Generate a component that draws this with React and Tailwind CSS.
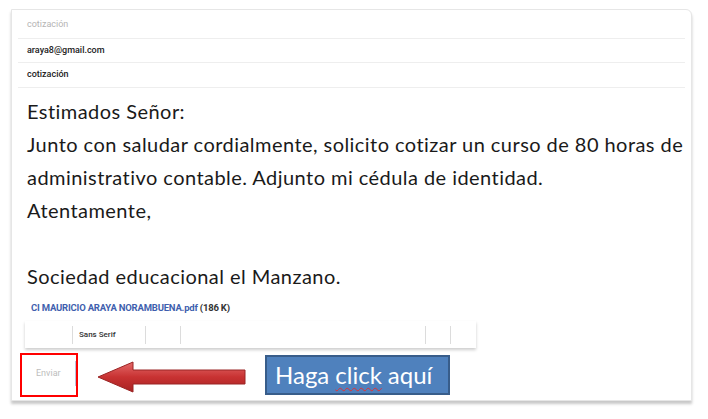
export default function App() {
  const ui = { fontFamily: 'Roboto, "Liberation Sans", sans-serif' };
  const body = { fontFamily: 'Lato, "Open Sans", sans-serif' };

  return (
    <div className="relative w-[708px] h-[419px] bg-white overflow-hidden" style={ui}>
      {/* mail compose card */}
      <div className="ml-[11px] mt-[9px] w-[681px] h-[392px] bg-white border border-[#e6e6e6] rounded-tr-[6px] shadow-[0_3px_3px_rgba(0,0,0,0.22)] flex flex-col">
        <div className="h-[28px] pl-[15px] pt-[2px] flex items-center text-[9px] text-[#b4b4b4]">cotización</div>
        <div className="mx-[6px] h-[25px] border-y border-[#eeeeee] flex items-center pl-[9px] text-[9px] font-medium text-[#222]">
          araya8@gmail.com
        </div>
        <div className="mx-[6px] h-[25px] border-b border-[#eeeeee] flex items-center pl-[9px] text-[9px] font-medium text-[#222]">
          cotización
        </div>

        <div className="pl-[15px] pt-[7px] text-[20px] tracking-[0.45px] leading-[33px] text-[#1a1a1a]" style={body}>
          <p>Estimados Señor:</p>
          <p>Junto con saludar cordialmente, solicito cotizar un curso de 80 horas de</p>
          <p>administrativo contable. Adjunto mi cédula de identidad.</p>
          <p>Atentamente,</p>
          <p>&nbsp;</p>
          <p>Sociedad educacional el Manzano.</p>
        </div>

        <div className="pl-[19px] mt-[8px] text-[9.5px] font-bold tracking-[-0.2px]">
          <span className="text-[#3f5fae]">CI MAURICIO ARAYA NORAMBUENA.pdf</span>
          <span className="text-[#333]"> (186 K)</span>
        </div>

        <div className="ml-[13px] mt-[6px] w-[451px] h-[27px] bg-white shadow-[0_2px_3px_rgba(0,0,0,0.2)] flex items-center text-[8px] font-medium text-[#333]">
          <div className="w-[48px] h-[18px] border-r border-[#dcdcdc]" />
          <div className="w-[73px] h-[18px] border-r border-[#dcdcdc] flex items-center pl-[6px]">Sans Serif</div>
          <div className="w-[35px] h-[18px] border-r border-[#dcdcdc]" />
          <div className="w-[245px] h-[18px] border-r border-[#dcdcdc]" />
          <div className="w-[25px] h-[18px] border-r border-[#dcdcdc]" />
        </div>

        <div className="flex items-center h-[40px] pl-[24px] mt-[5px]">
          <span className="text-[9px] text-[#bdbdbd]">Enviar</span>
          <div className="ml-[14px] w-[2px] h-[25px] bg-[#b8c4dc]" />
        </div>
      </div>

      {/* annotations */}
      <div className="absolute left-[20px] top-[353px] w-[58px] h-[44px] border-2 border-[#ff0000]" />

      <svg className="absolute left-[96px] top-[360px]" width="152" height="34" viewBox="0 0 152 34">
        <defs>
          <linearGradient id="arr" x1="0" y1="0" x2="0" y2="1">
            <stop offset="0" stopColor="#e46a6a" />
            <stop offset="0.5" stopColor="#c83232" />
            <stop offset="1" stopColor="#a82222" />
          </linearGradient>
        </defs>
        <polygon
          points="2,17 37,2 37,10 149,10 149,24 37,24 37,32"
          fill="url(#arr)"
          stroke="#9a2424"
          strokeWidth="1"
        />
      </svg>

      <div className="absolute left-[265px] top-[355px] w-[185px] h-[40px] bg-[#4f81bd] border-2 border-[#385d8a] flex items-center pl-[8px] text-white text-[24px]" style={body}>
        Haga <span className="mx-[6px] underline decoration-wavy decoration-[#e23030] decoration-1 underline-offset-[3px]">click</span> aquí
      </div>
    </div>
  );
}
